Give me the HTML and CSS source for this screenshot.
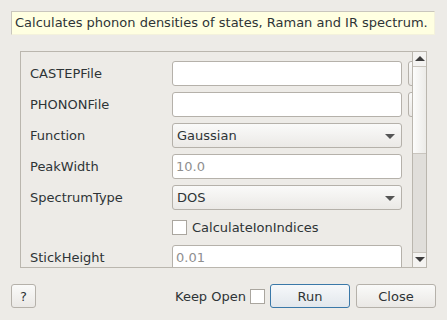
FILE: index.html
```html
<!DOCTYPE html>
<html lang="en">
<head>
    <meta charset="UTF-8">
    <title>Phonon DOS</title>
    <link rel="stylesheet" href="styles.css">
</head>
<body>
    <div class="tip">Calculates phonon densities of states, Raman and IR spectrum.</div>

    <div class="panel">
        <div class="viewport">
            <div class="row">
                <span class="label">CASTEPFile</span>
                <span class="field"></span>
                <span class="browse"></span>
            </div>
            <div class="row">
                <span class="label">PHONONFile</span>
                <span class="field"></span>
                <span class="browse"></span>
            </div>
            <div class="row">
                <span class="label">Function</span>
                <span class="combo">Gaussian<span class="caret"></span></span>
            </div>
            <div class="row">
                <span class="label">PeakWidth</span>
                <span class="field placeholder">10.0</span>
            </div>
            <div class="row">
                <span class="label">SpectrumType</span>
                <span class="combo">DOS<span class="caret"></span></span>
            </div>
            <div class="row check-row">
                <span class="label"></span>
                <span class="box"></span>
                <span>CalculateIonIndices</span>
            </div>
            <div class="row">
                <span class="label">StickHeight</span>
                <span class="field placeholder">0.01</span>
            </div>
        </div>
        <div class="scrollbar">
            <div class="arrow up"></div>
            <div class="slider"></div>
            <div class="trough"></div>
            <div class="arrow down"></div>
        </div>
    </div>

    <div class="footer">
        <button class="btn help">?</button>
        <span class="keep">Keep Open</span>
        <span class="box"></span>
        <button class="btn run">Run</button>
        <button class="btn close">Close</button>
    </div>
</body>
</html>
```

FILE: styles.css
```css
body {
    margin: 0;
    width: 447px;
    height: 320px;
    background: #edebe7;
    font-family: "DejaVu Sans", sans-serif;
    font-size: 13px;
    color: #2e3436;
    overflow: hidden;
}

.tip {
    margin: 11px 0 0 11px;
    width: 424px;
    height: 24px;
    box-sizing: border-box;
    background: #ffffe1;
    border: 1px solid #c9c6bd;
    border-right-color: #f4f2dc;
    border-bottom-color: #f4f2dc;
    padding-left: 3px;
    line-height: 22px;
    white-space: nowrap;
}

.panel {
    margin: 16px 0 0 20px;
    width: 407px;
    height: 217px;
    box-sizing: border-box;
    border: 1px solid #bab6ae;
    display: flex;
}

.viewport {
    flex: 1;
    overflow: hidden;
    padding: 9px 0 0 9px;
}

.row {
    display: flex;
    align-items: center;
    height: 25px;
    margin-bottom: 6px;
    white-space: nowrap;
}

.check-row {
    height: 23px;
}

.label {
    width: 142px;
    flex: none;
}

.field, .combo {
    width: 230px;
    height: 25px;
    box-sizing: border-box;
    flex: none;
    border: 1px solid #b5b1aa;
    border-radius: 3px;
    background: #fff;
    padding-left: 3px;
    line-height: 23px;
}

.placeholder {
    color: #8f8f8f;
}

.combo {
    position: relative;
    background: linear-gradient(#fafaf9, #ebe9e6);
    padding-left: 4px;
}

.caret {
    position: absolute;
    right: 6px;
    top: 10px;
    border-left: 5px solid transparent;
    border-right: 5px solid transparent;
    border-top: 5px solid #555;
}

.browse {
    width: 30px;
    height: 25px;
    box-sizing: border-box;
    flex: none;
    margin-left: 6px;
    border: 1px solid #b5b1aa;
    border-radius: 3px;
    background: linear-gradient(#fafaf9, #ebe9e6);
}

.box {
    width: 13px;
    height: 13px;
    flex: none;
    border: 1px solid #aaa69f;
    background: #fff;
    margin-right: 5px;
}

.scrollbar {
    width: 13px;
    border-left: 1px solid #bab6ae;
    display: flex;
    flex-direction: column;
}

.arrow {
    height: 14px;
    flex: none;
    position: relative;
    background: #f4f3f1;
}

.arrow::after {
    content: "";
    position: absolute;
    left: 2px;
    border-left: 5px solid transparent;
    border-right: 5px solid transparent;
}

.up {
    border-bottom: 1px solid #c9c5be;
}

.up::after {
    top: 4px;
    border-bottom: 5px solid #3c3c3c;
}

.down {
    border-top: 1px solid #c9c5be;
}

.down::after {
    top: 4px;
    border-top: 5px solid #3c3c3c;
}

.slider {
    height: 86px;
    flex: none;
    background: linear-gradient(to right, #fcfcfb, #ecebe8);
    border-bottom: 1px solid #c9c5be;
}

.trough {
    flex: 1;
    background: #e0deda;
}

.footer {
    margin-top: 16px;
    padding: 0 11px;
    display: flex;
    align-items: center;
}

.btn {
    height: 24px;
    box-sizing: border-box;
    border: 1px solid #b5b1aa;
    border-radius: 3px;
    background: linear-gradient(#fafaf9, #eae8e5);
    font-family: inherit;
    font-size: 13px;
    color: #2e3436;
    padding: 0;
}

.help {
    width: 25px;
}

.keep {
    margin-left: 139px;
    margin-right: 4px;
}

.footer .box {
    margin-right: 5px;
}

.run {
    width: 80px;
    border-color: #3a78a8;
    background: linear-gradient(#f6f8fa, #e2e7ec);
}

.close {
    width: 80px;
    margin-left: 6px;
}
```
